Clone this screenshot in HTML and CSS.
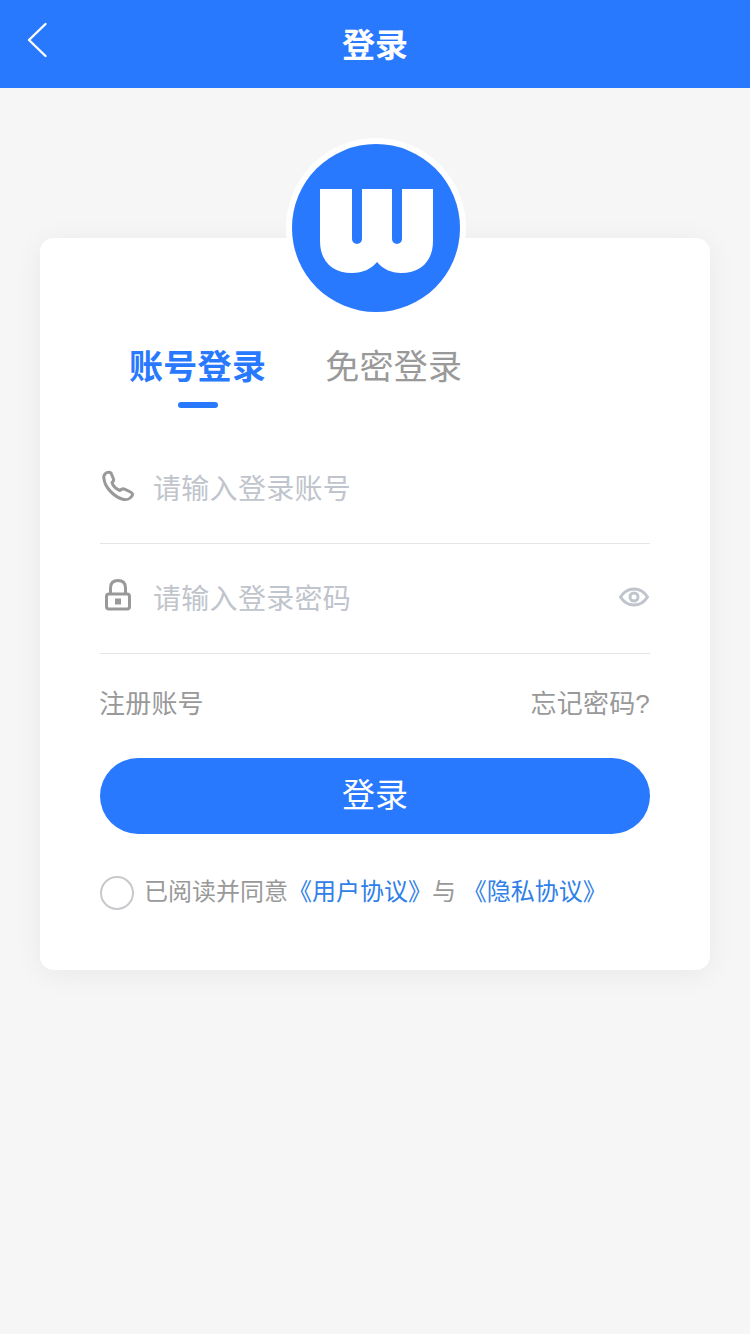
FILE: index.html
```html
<!DOCTYPE html>
<html lang="zh-CN">
<head>
  <meta charset="UTF-8" />
  <meta name="viewport" content="width=device-width, initial-scale=1.0"/>
  <title>登录</title>
  <link rel="stylesheet" href="styles.css">
</head>
<body>

  <header class="topbar">
    <svg class="back-icon" width="24" height="36" viewBox="0 0 24 36">
      <path d="M19.5 2 L3 18 L19.5 34" fill="none" stroke="#fff" stroke-width="2.4" stroke-linecap="round" stroke-linejoin="round"/>
    </svg>
    <h1 class="topbar-title">登录</h1>
  </header>

  <main class="card">
    <div class="logo">
      <svg width="168" height="168" viewBox="0 0 168 168">
        <circle cx="84" cy="84" r="84" fill="#2979ff"/>
        <path class="logo-mark" d="M28 45 H60 V95 A5 5 0 0 0 70 95 V45 H100 V95 A5 5 0 0 0 110 95 V45 H141 V97 C141 118 128 129 109 129 C99 129 91 125 85 118 C79 125 71 129 60 129 C41 129 28 118 28 97 Z" fill="#fff"/>
      </svg>
    </div>

    <div class="tabs">
      <div class="tab tab-active">账号登录</div>
      <div class="tab">免密登录</div>
    </div>

    <div class="field field-first">
      <svg class="field-icon" width="36" height="36" viewBox="0 0 36 36">
        <path d="M5 5 C6 3.5 9 2.5 11 4 L13.5 10 C14 11.5 13.5 12.5 12 13.5 C13 17 16 20 20 21.5 C21.5 20 23 19.5 24.5 20.2 L30.5 23 C32.5 24 33 25.5 32 27 C30 30 26 31.5 22 30 C13 27 5 18 4 10 C3.5 8 4 6 5 5 Z" fill="none" stroke="#999" stroke-width="3" stroke-linejoin="round"/>
      </svg>
      <span class="placeholder">请输入登录账号</span>
    </div>

    <div class="field">
      <svg class="field-icon" width="36" height="36" viewBox="0 0 36 36">
        <path d="M10.5 15 V9 C10.5 4 13.5 1.5 18 1.5 C22.5 1.5 25.5 4 25.5 9 V15" fill="none" stroke="#999" stroke-width="3"/>
        <rect x="6.5" y="15" width="23" height="15" rx="2.5" fill="none" stroke="#999" stroke-width="3"/>
        <rect x="15" y="19.5" width="6" height="6" fill="#999"/>
      </svg>
      <span class="placeholder">请输入登录密码</span>
      <svg class="eye-icon" width="30" height="20" viewBox="0 0 30 20">
        <path d="M1.5 10 C5 4.5 9.5 2 15 2 C20.5 2 25 4.5 28.5 10 C25 15.5 20.5 18 15 18 C9.5 18 5 15.5 1.5 10 Z" fill="none" stroke="#c0c4cc" stroke-width="3" stroke-linejoin="round"/>
        <circle cx="15" cy="10" r="4" fill="none" stroke="#c0c4cc" stroke-width="3"/>
      </svg>
    </div>

    <div class="links">
      <span>注册账号</span>
      <span>忘记密码?</span>
    </div>

    <button class="login-btn">登录</button>

    <div class="agree">
      <span class="radio"></span>
      <span class="agree-text">已阅读并同意<a class="agree-link">《用户协议》</a>与 <a class="agree-link">《隐私协议》</a></span>
    </div>
  </main>

</body>
</html>
```

FILE: styles.css
```css
body {
  font-family: "Liberation Sans", "Noto Sans CJK SC", sans-serif;
  background-color: #f6f6f6;
  margin: 0;
  height: 1334px;
  overflow: hidden;
}

.topbar {
  background-color: #2979ff;
  height: 88px;
  display: flex;
  align-items: center;
  justify-content: center;
  position: relative;
}

.back-icon {
  position: absolute;
  left: 26px;
  top: 22px;
}

.topbar-title {
  margin: 0;
  color: white;
  font-size: 33px;
  font-weight: bold;
  padding-top: 4px;
  line-height: 84px;
}

.card {
  display: flow-root;
  background: white;
  margin: 150px 40px 0;
  height: 732px;
  border-radius: 14px;
  box-shadow: 0 4px 30px rgba(0,0,0,0.06);
  padding: 0 60px;
  box-sizing: border-box;
}

.logo {
  width: 168px;
  height: 168px;
  border: 6px solid white;
  border-radius: 50%;
  margin: -100px 0 0 186px;
}

.logo svg {
  display: block;
}

.logo-mark {
  filter: blur(0.6px);
}

.tabs {
  display: flex;
  gap: 59px;
  margin: 24px 0 0 29px;
}

.tab {
  font-size: 34px;
  letter-spacing: 0.3px;
  line-height: 50px;
  color: #999;
  padding-bottom: 20px;
  position: relative;
}

.tab-active {
  color: #2979ff;
  font-weight: bold;
}

.tab-active::after {
  content: "";
  position: absolute;
  left: 49px;
  bottom: 4px;
  width: 40px;
  height: 6px;
  border-radius: 3px;
  background-color: #2979ff;
}

.field {
  height: 110px;
  padding-bottom: 4px;
  display: flex;
  align-items: center;
  border-bottom: 1px solid #e5e5e5;
  box-sizing: border-box;
}

.field-first {
  margin-top: 22px;
}

.field-icon {
  margin-right: 17px;
}

.placeholder {
  font-size: 28px;
  letter-spacing: 0.3px;
  color: #c0c4cc;
  flex: 1;
}

.eye-icon {
  margin-right: 1px;
}

.links {
  display: flex;
  justify-content: space-between;
  font-size: 26px;
  letter-spacing: 0.2px;
  line-height: 40px;
  color: #999;
  margin: 30px 0 0 -1px;
}

.login-btn {
  width: 100%;
  height: 76px;
  margin-top: 34px;
  padding: 0 0 6px;
  border: none;
  border-radius: 38px;
  background-color: #2979ff;
  color: white;
  font-family: inherit;
  font-size: 33px;
  cursor: pointer;
  display: block;
}

.agree {
  display: flex;
  align-items: flex-start;
  margin-top: 42px;
}

.radio {
  width: 34px;
  height: 34px;
  border: 2px solid #c8c9cc;
  border-radius: 50%;
  box-sizing: border-box;
  margin-right: 10px;
}

.agree-text {
  font-size: 24px;
  line-height: 32px;
  color: #999;
}

.agree-link {
  color: #2f80e8;
}
```
